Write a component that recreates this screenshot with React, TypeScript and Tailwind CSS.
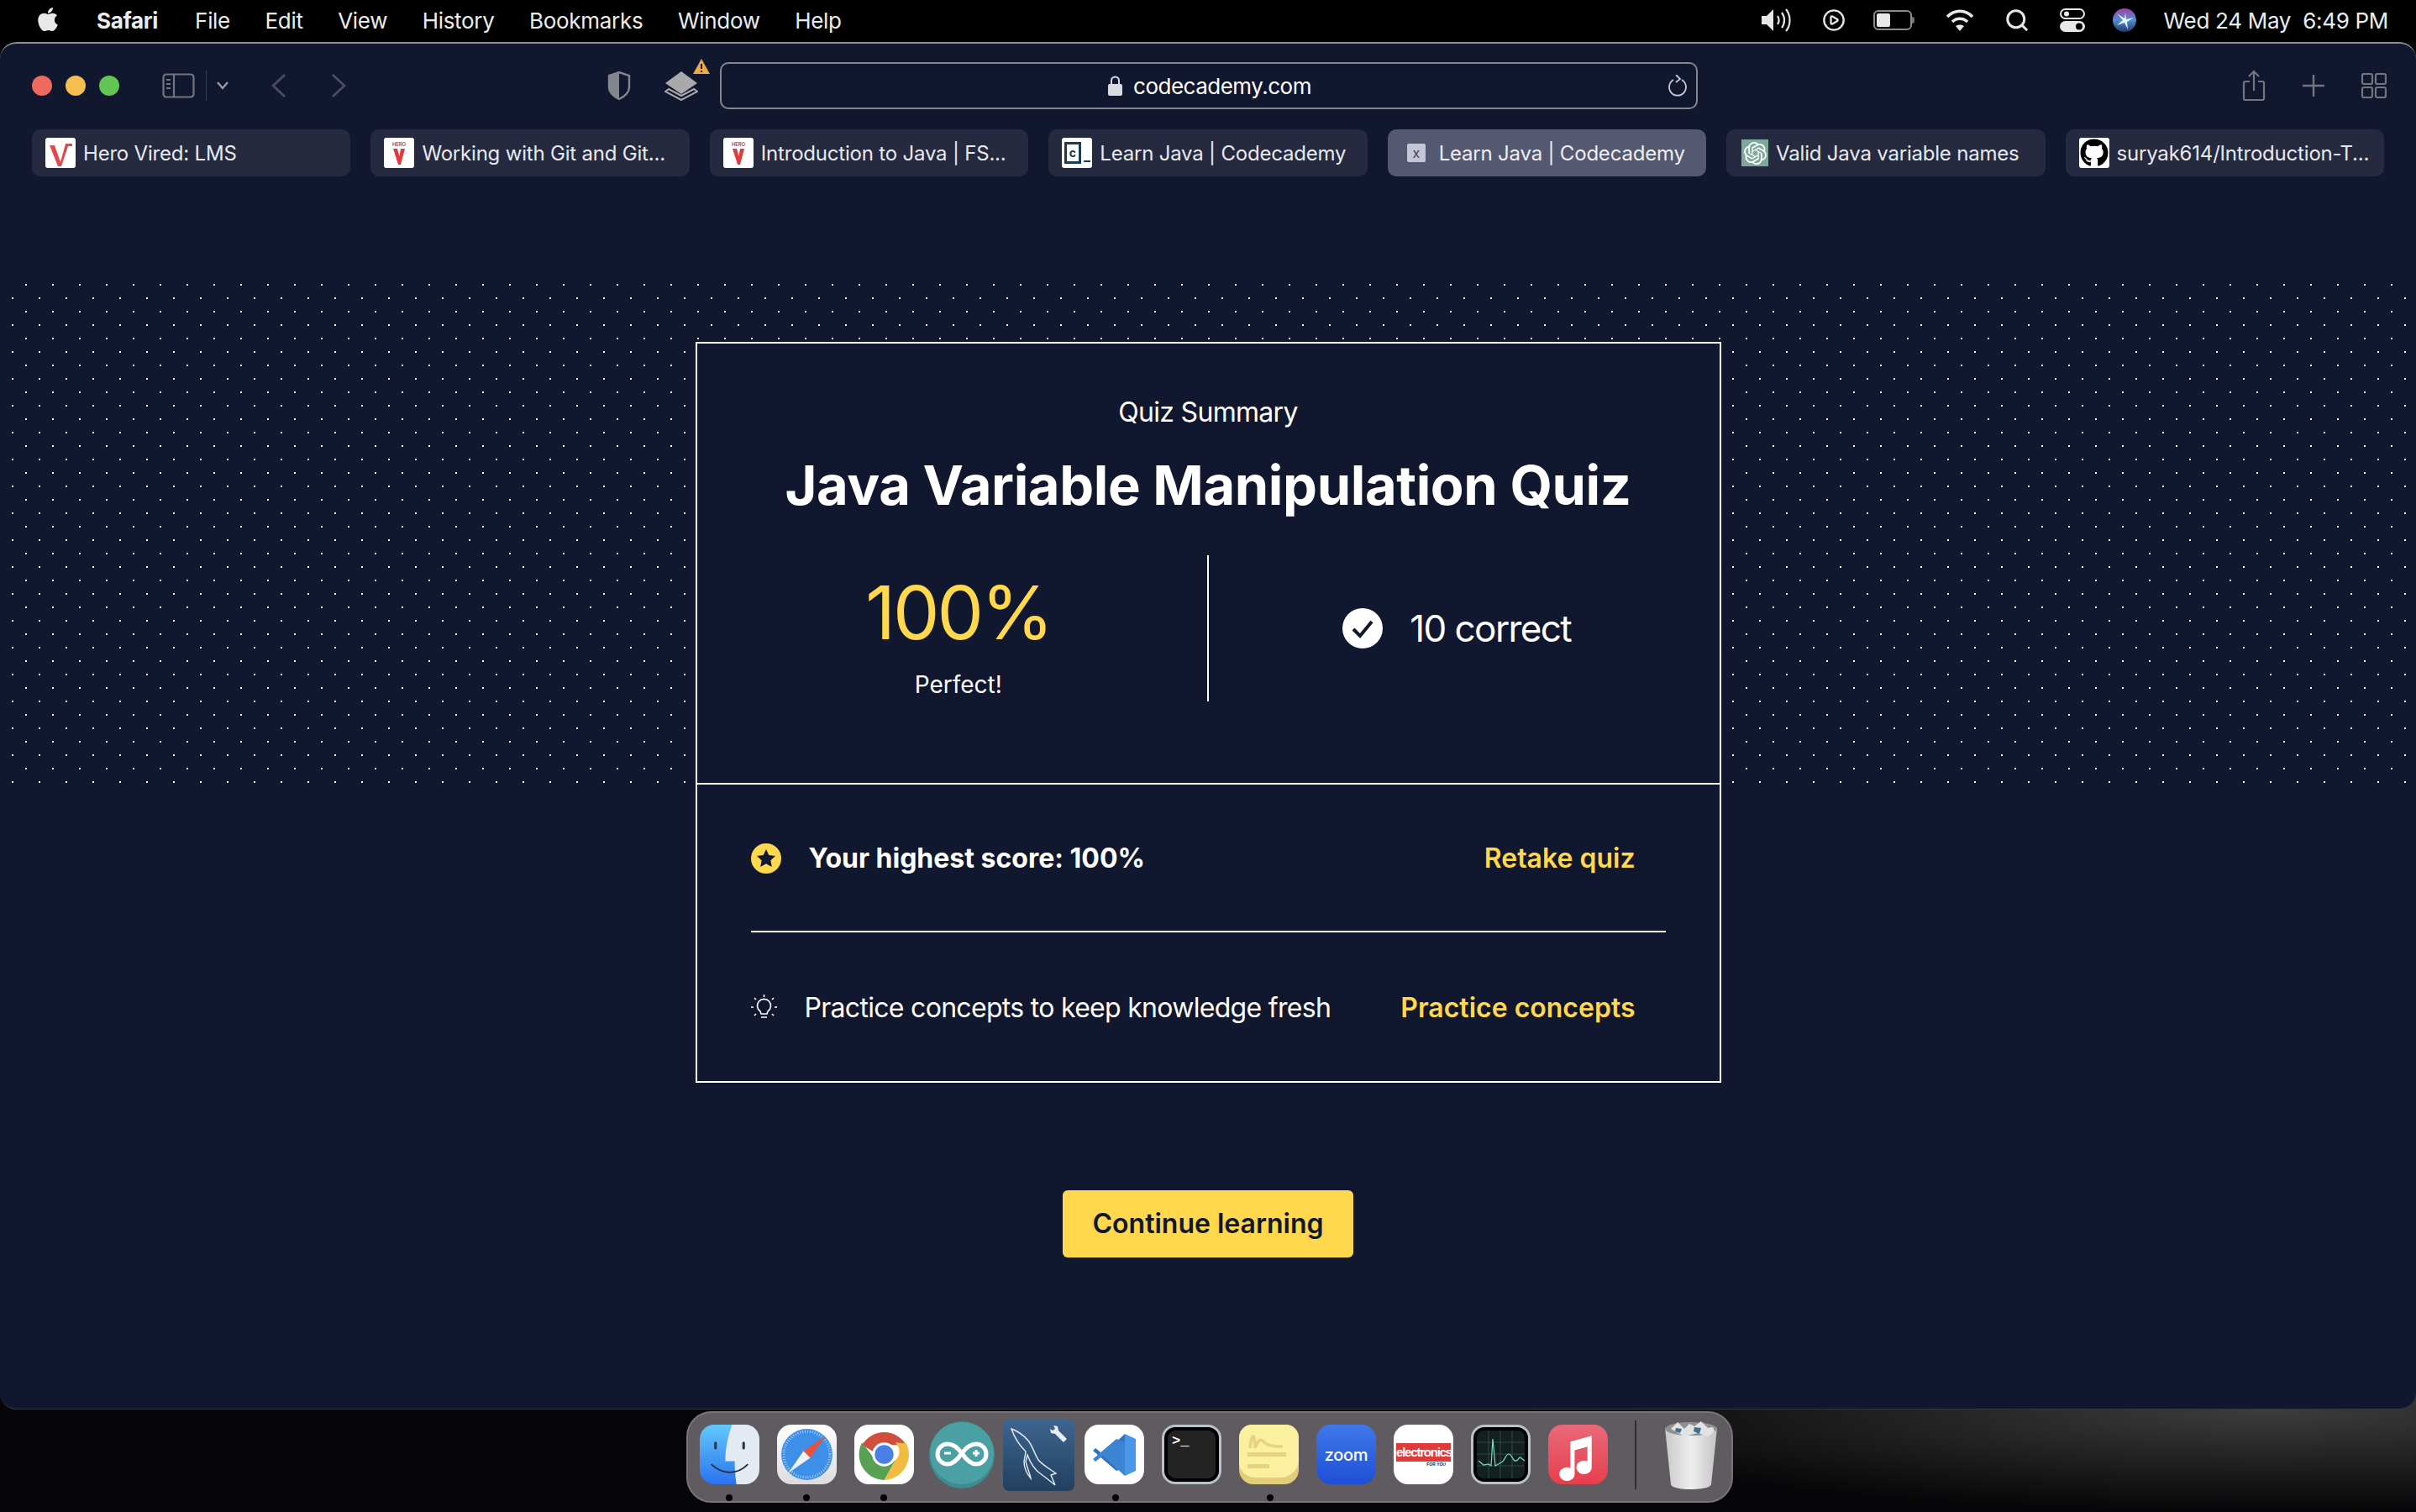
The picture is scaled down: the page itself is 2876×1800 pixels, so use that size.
import { CirclePlay, Search } from "lucide-react";
import { FaApple, FaGithub } from "react-icons/fa";
import { SiOpenai } from "react-icons/si";

const menuItems = ["File", "Edit", "View", "History", "Bookmarks", "Window", "Help"];

const RedV = ({ small }: { small?: boolean }) => (
  <svg viewBox="0 0 36 36" className="h-full w-full">
    {small ? (
      <>
        <text x="18" y="10" textAnchor="middle" fontSize="6" fontWeight="700" fill="#d8454a">HERO</text>
        <path d="M11 13h5l2.5 9 1.5-9h5l-5 19h-3z" fill="#e0393e" />
      </>
    ) : (
      <path d="M5 9h6l7 20 6-22h8v3h-5l-8 24h-4z" fill="#e2484c" />
    )}
  </svg>
);

const Favicon = ({ children, className }: { children: React.ReactNode; className?: string }) => (
  <div className={`flex h-[36px] w-[36px] shrink-0 items-center justify-center overflow-hidden rounded-[3px] bg-white ${className ?? ""}`}>
    {children}
  </div>
);

const Tab = ({ icon, label, active }: { icon: React.ReactNode; label: string; active?: boolean }) => (
  <div className={`flex h-[56px] flex-1 items-center gap-[9px] rounded-[10px] pl-[16px] text-[24px] tracking-[-0.2px] ${active ? "bg-[#545870] text-[#eeeef2]" : "bg-[#262a40] text-[#e8e9ee]"}`}>
    {icon}
    <span className="whitespace-nowrap pt-[2px]">{label}</span>
  </div>
);

const IconTile = ({ children, className }: { children: React.ReactNode; className?: string }) => (
  <div className={`flex h-[71px] w-[71px] shrink-0 items-center justify-center overflow-hidden rounded-[17px] ${className ?? ""}`}>
    {children}
  </div>
);

const Finder = () => (
  <svg viewBox="0 0 70 70" className="h-[71px] w-[71px] shrink-0">
    <defs>
      <linearGradient id="fb" x1="0" y1="0" x2="0" y2="1">
        <stop offset="0" stopColor="#62c9fb" />
        <stop offset="1" stopColor="#2c72ee" />
      </linearGradient>
    </defs>
    <rect width="70" height="70" rx="17" fill="url(#fb)" />
    <path d="M38 0h15a17 17 0 0 1 17 17v36a17 17 0 0 1-17 17H43c-1-9-2-15-2-27h-11c0-16 3-29 8-43z" fill="#e4eaf1" />
    <rect x="17" y="20" width="3" height="9" rx="1.5" fill="#23344c" />
    <rect x="50" y="20" width="3" height="9" rx="1.5" fill="#23344c" />
    <path d="M14 47c13 12 30 12 42 0" fill="none" stroke="#1f2a3a" strokeWidth="1.8" strokeLinecap="round" />
  </svg>
);

const Safari = () => (
  <IconTile className="bg-[linear-gradient(#ffffff,#dcdcdc)]">
    <svg viewBox="0 0 70 70" className="h-full w-full">
      <circle cx="35" cy="35" r="30" fill="#3d8fe8" />
      <circle cx="35" cy="35" r="27" fill="none" stroke="#d8e8fa" strokeWidth="3" strokeDasharray="0.7 2.2" />
      <path d="M57 13L31 31l8 8z" fill="#e8503f" />
      <path d="M13 57l26-18-8-8z" fill="#f1f1f1" />
    </svg>
  </IconTile>
);

const Chrome = () => (
  <IconTile className="bg-white">
    <svg viewBox="0 0 70 70" className="h-full w-full">
      <path d="M9 24a30 30 0 0 1 52 0H35a12 12 0 0 0-12 8z" fill="#d24e3f" />
      <path d="M61 22a30 30 0 0 1-26 43l13-23a14 14 0 0 0 0-21z" fill="#f2bc42" />
      <path d="M9 21a30 30 0 0 0 26 44l13-23-14 6a14 14 0 0 1-12-10z" fill="#57a054" />
      <circle cx="35" cy="35" r="14" fill="#ffffff" />
      <circle cx="35" cy="35" r="11" fill="#4a7fe6" />
    </svg>
  </IconTile>
);

const Arduino = () => (
  <svg viewBox="0 0 78 80" className="h-[80px] w-[78px] shrink-0">
    <ellipse cx="39" cy="40" rx="39" ry="40" fill="#3b8d90" />
    <ellipse cx="39" cy="38" rx="38" ry="37" fill="#4ba0a4" />
    <path d="M39 38c-6-8-11-11-17-11a11 11 0 0 0 0 24c6 0 11-4 17-13zm0 0c6-8 11-11 17-11a11 11 0 0 1 0 24c-6 0-11-4-17-13z" fill="none" stroke="#fff" strokeWidth="5" />
    <path d="M18 38h8" stroke="#fff" strokeWidth="3" />
    <path d="M52 38h8M56 34v8" stroke="#fff" strokeWidth="3" />
  </svg>
);

const MySql = () => (
  <svg viewBox="0 0 85 86" className="ml-[13px] mr-[12px] h-[86px] w-[85px] shrink-0">
    <defs>
      <linearGradient id="my" x1="0" y1="0" x2="0" y2="1">
        <stop offset="0" stopColor="#3e6690" />
        <stop offset="1" stopColor="#223f5f" />
      </linearGradient>
    </defs>
    <rect width="85" height="86" rx="7" fill="url(#my)" />
    <path d="M10 12c8 3 14 7 20 14 6 8 7 15 12 23 5 6 14 11 21 16l-6 2 5 12-10-8-8-6c-7-5-12-14-15-22l-2 8c2 8 5 14 6 20-5-6-8-12-8-20l2-12c-7-7-13-15-17-27z" fill="none" stroke="#e6edf4" strokeWidth="1.4" />
    <path d="M60 8l5 1 1 5 10 10-4 4-10-10-5-1-1-5 3 2 3-2z" fill="#e8edf2" />
  </svg>
);

const VsCode = () => (
  <IconTile className="bg-white">
    <svg viewBox="0 0 70 70" className="h-[70px] w-[70px]">
      <path d="M47 10l13 6v38l-13 6z" fill="#4a96e8" />
      <path d="M47 10L21 34l-9-7-3 3 28 24 10-4z" fill="#2f74bd" />
      <path d="M47 60L21 36l-9 7-3-3 28-24 10 4z" fill="#3b85d3" />
    </svg>
  </IconTile>
);

const Terminal = () => (
  <div className="flex h-[71px] w-[71px] shrink-0 rounded-[16px] border-[3px] border-[#b9c3c9] bg-black p-[4px]">
    <div className="flex-1 rounded-[9px] bg-[#232323] pl-[5px] pt-[3px] font-['Liberation_Mono',monospace] text-[17px] font-bold leading-[20px] text-white">
      &gt;_
    </div>
  </div>
);

const Notes = () => (
  <svg viewBox="0 0 71 71" className="h-[71px] w-[71px] shrink-0">
    <rect width="71" height="71" rx="17" fill="#e3cd7a" />
    <path d="M0 15A15 15 0 0 1 15 0h41a15 15 0 0 1 15 15v28c0 10-10 20-22 20H20C8 63 0 55 0 44z" fill="#fbf0a0" />
    <path d="M13 28c2-20 6-18 6 0 5-14 8-10 12-6 5 3 8 4 21 4" fill="none" stroke="#e6d280" strokeWidth="3.5" />
    <rect x="10" y="33" width="46" height="5" fill="#e6d280" />
    <rect x="10" y="47" width="26" height="5" fill="#e6d280" />
  </svg>
);

const Electronics = () => (
  <IconTile className="flex-col bg-white">
    <div className="w-[65px] bg-[#df3b3b] text-center font-['Liberation_Sans',sans-serif] text-[15px] font-bold leading-[22px] tracking-[-1.2px] text-white">
      electronics
    </div>
    <div className="w-[65px] pr-[6px] text-right font-['Liberation_Sans',sans-serif] text-[5px] font-bold leading-[6px] text-[#222]">FOR YOU</div>
  </IconTile>
);

const Activity = () => (
  <div className="flex h-[71px] w-[71px] shrink-0 rounded-[16px] border-[3px] border-[#b9c3c9] bg-black p-[4px]">
    <svg viewBox="0 0 57 57" className="h-full w-full rounded-[8px]">
      <rect width="57" height="57" fill="#12211f" />
      <path d="M0 14h57M0 28h57M0 42h57M14 0v57M28 0v57M42 0v57" stroke="#2c4a45" strokeWidth="1" />
      <path d="M2 36l6 5 6-1 3 2 2-32 3 32 7-4c5-2 5-10 9-10s5 10 9 8 3-6 6-3l4 3" fill="none" stroke="#7fd8c2" strokeWidth="1.2" />
    </svg>
  </div>
);

const Music = () => (
  <IconTile className="bg-[linear-gradient(#e8697a,#e83e4c)]">
    <svg viewBox="0 0 70 70" className="h-full w-full">
      <path d="M26 20l25-7v37a9 8 0 1 1-5-7V26l-15 4v28a9 8 0 1 1-5-7z" fill="#fff" />
    </svg>
  </IconTile>
);

const Trash = () => (
  <svg viewBox="0 0 64 82" className="ml-[33px] h-[82px] w-[64px] shrink-0">
    <defs>
      <linearGradient id="tr" x1="0" y1="0" x2="1" y2="0">
        <stop offset="0" stopColor="#c9c9c9" />
        <stop offset="0.5" stopColor="#eeeeee" />
        <stop offset="1" stopColor="#c4c4c4" />
      </linearGradient>
    </defs>
    <path d="M1 9h62l-7 67c-1 8-47 8-48 0z" fill="url(#tr)" />
    <ellipse cx="32" cy="10" rx="31" ry="8" fill="#8f9092" />
    <path d="M8 10L16 2l8 8 6-6 6 3 8-6 8 8 6-1 2 5-8 6-12-4-16 4z" fill="#e3e3e3" />
    <path d="M14 9l7 1-2 5-6-2zM36 8l8 1-2 7-7-3z" fill="#3f6f8f" />
  </svg>
);

const Sidebar = () => (
  <svg viewBox="0 0 39 30" className="h-[30px] w-[39px]" fill="none" stroke="#73757f" strokeWidth="2.2">
    <rect x="1.5" y="1.5" width="36" height="27" rx="3.5" />
    <path d="M14 2v26" />
    <path d="M5 8h5M5 13h5M5 18h5" stroke="#73757f" strokeWidth="2" />
  </svg>
);

export default function App() {
  return (
    <div className="flex h-[1800px] w-[2876px] flex-col overflow-hidden bg-[radial-gradient(ellipse_900px_120px_at_2700px_1680px,#3c3c3c,#060608)] font-['Inter',sans-serif]">
      {/* mac menu bar */}
      <div className="flex h-[50px] shrink-0 items-center bg-black pb-[2px] text-[26px] tracking-[-0.3px] text-[#ececec]">
        <FaApple className="ml-[42px] mb-[2px] h-[32px] w-[30px] text-[#e8e8e8]" />
        <span className="ml-[43px] font-bold">Safari</span>
        <div className="ml-[44px] flex gap-[41.5px]">
          {menuItems.map((m) => (
            <span key={m}>{m}</span>
          ))}
        </div>
        <div className="ml-auto flex items-center pr-[33px]">
          <svg viewBox="0 0 37 30" className="h-[30px] w-[37px]" fill="none" stroke="#e6e6e6" strokeWidth="2.2">
            <path d="M1 10h6l8-8v26l-8-8H1z" fill="#e6e6e6" stroke="none" />
            <path d="M20 10c2 3 2 7 0 10M25 6c4 5 4 13 0 18M30 2c6 7 6 19 0 26" />
          </svg>
          <CirclePlay className="ml-[36px] h-[28px] w-[28px] text-[#e6e6e6]" strokeWidth={2} />
          <div className="ml-[33px] flex items-center">
            <div className="flex h-[24px] w-[46px] rounded-[6px] border-2 border-[#8b8b8b] p-[2px]">
              <div className="w-[16px] rounded-[2px] bg-[#e8e8e8]" />
            </div>
            <div className="h-[8px] w-[3px] rounded-r bg-[#777]" />
          </div>
          <svg viewBox="0 0 34 28" className="ml-[37px] h-[28px] w-[34px]" fill="none" stroke="#e8e8e8" strokeWidth="3.6">
            <path d="M2 10c9-9 21-9 30 0" />
            <path d="M8 16c5-5 13-5 18 0" />
            <path d="M17 27l-5-6c3-2 7-2 10 0z" fill="#e8e8e8" stroke="none" />
          </svg>
          <Search className="ml-[36px] h-[30px] w-[30px] text-[#e6e6e6]" strokeWidth={2.4} />
          <svg viewBox="0 0 30 28" className="ml-[36px] h-[28px] w-[30px]">
            <rect x="1" y="1" width="28" height="11" rx="5.5" fill="none" stroke="#e8e8e8" strokeWidth="2" />
            <circle cx="8" cy="6.5" r="3" fill="#e8e8e8" />
            <rect y="15" width="30" height="13" rx="6.5" fill="#e8e8e8" />
            <circle cx="23" cy="21.5" r="4" fill="#000" />
          </svg>
          <svg viewBox="0 0 28 28" className="ml-[33px] h-[28px] w-[28px]">
            <defs>
              <linearGradient id="siri" x1="0" y1="0" x2="0" y2="1">
                <stop offset="0" stopColor="#a23fa8" />
                <stop offset="0.5" stopColor="#4f8fd0" />
                <stop offset="1" stopColor="#233a6a" />
              </linearGradient>
            </defs>
            <circle cx="14" cy="14" r="14" fill="url(#siri)" />
            <path d="M14 12L5 6l7 8-7 6 9-3 4 8-1-9 8-5-9 2-1-8z" fill="#e8f4ff" />
          </svg>
          <span className="ml-[33px] whitespace-nowrap">Wed 24 May&nbsp;&nbsp;6:49 PM</span>
        </div>
      </div>

      {/* safari window */}
      <div className="flex h-[1628px] shrink-0 flex-col rounded-[20px] border-t-2 border-b border-t-[#8d8e95] border-b-[#35374f] bg-[#11172e]">
        <div className="flex h-[102px] shrink-0 items-center pb-[2px] pl-[38px]">
          <div className="flex gap-[16px]">
            <div className="h-[24px] w-[24px] rounded-full bg-[#ee6a5f]" />
            <div className="h-[24px] w-[24px] rounded-full bg-[#f5bf4f]" />
            <div className="h-[24px] w-[24px] rounded-full bg-[#62c554]" />
          </div>
          <div className="ml-[51px]">
            <Sidebar />
          </div>
          <div className="ml-[13px] h-[36px] w-px bg-[#3b3e52]" />
          <svg viewBox="0 0 16 10" className="ml-[11px] h-[10px] w-[16px]" fill="none" stroke="#9a9ba3" strokeWidth="2.4">
            <path d="M2 1l6 7 6-7" />
          </svg>
          <svg viewBox="0 0 18 28" className="ml-[50px] h-[28px] w-[18px]" fill="none" stroke="#4c4f63" strokeWidth="2.6">
            <path d="M16 1L2 14l14 13" />
          </svg>
          <svg viewBox="0 0 18 28" className="ml-[53px] h-[28px] w-[18px]" fill="none" stroke="#4c4f63" strokeWidth="2.6">
            <path d="M2 1l14 13L2 27" />
          </svg>
          <svg viewBox="0 0 28 34" className="ml-[311px] h-[34px] w-[28px]">
            <path d="M14 1l12 4v14c0 6-6 11-12 14C8 30 2 25 2 19V5z" fill="none" stroke="#84868f" strokeWidth="2.4" />
            <path d="M14 1L2 5v14c0 6 6 11 12 14z" fill="#84868f" />
          </svg>
          <div className="relative ml-[40px] h-[36px] w-[54px]">
            <svg viewBox="0 0 40 36" className="h-[36px] w-[40px]">
              <path d="M20 1l19 14-19 13L1 15z" fill="#a9a9ab" />
              <path d="M5 22L1 25l19 10 19-10-4-3-15 8z" fill="none" stroke="#a9a9ab" strokeWidth="2" />
            </svg>
            <svg viewBox="0 0 20 18" className="absolute left-[34px] top-[-14px] h-[18px] w-[20px]">
              <path d="M10 0l10 18H0z" fill="#f0a93b" />
              <path d="M10 6v6M10 14v2" stroke="#11172e" strokeWidth="2" />
            </svg>
          </div>
          <div className="relative ml-[12px] flex h-[56px] w-[1164px] items-center justify-center rounded-[10px] border-2 border-[#85868f] pl-[2px] text-[26px] tracking-[-0.5px] text-white">
            <svg viewBox="0 0 17 24" className="mr-[13px] h-[24px] w-[17px]">
              <path d="M4 11V6a4.5 4.5 0 0 1 9 0v5" fill="none" stroke="#d9d9de" strokeWidth="2" />
              <rect y="10" width="17" height="14" rx="2" fill="#d9d9de" />
            </svg>
            codecademy.com
            <svg viewBox="0 0 24 26" className="absolute right-[10px] h-[26px] w-[24px]" fill="none" stroke="#c9cad0" strokeWidth="1.8">
              <path d="M7 6a10 10 0 1 0 10 0" />
              <path d="M10 0l5 5-5 4" />
            </svg>
          </div>
          <svg viewBox="0 0 28 38" className="ml-[648px] h-[38px] w-[28px]" fill="none" stroke="#73757f" strokeWidth="2.2">
            <path d="M14 25V2M8 8l6-6 6 6" />
            <path d="M9 14H4a2 2 0 0 0-2 2v18a2 2 0 0 0 2 2h20a2 2 0 0 0 2-2V16a2 2 0 0 0-2-2h-5" />
          </svg>
          <svg viewBox="0 0 28 28" className="ml-[43px] h-[28px] w-[28px]" stroke="#73757f" strokeWidth="2.4">
            <path d="M14 1v26M1 14h26" />
          </svg>
          <svg viewBox="0 0 30 30" className="ml-[43px] h-[30px] w-[30px]" fill="none" stroke="#73757f" strokeWidth="2.2">
            <rect x="1" y="1" width="12" height="12" rx="2" />
            <rect x="17" y="1" width="12" height="12" rx="2" />
            <rect x="1" y="17" width="12" height="12" rx="2" />
            <rect x="17" y="17" width="12" height="12" rx="2" />
          </svg>
        </div>

        <div className="flex shrink-0 gap-[24px] px-[38px]">
          <Tab label="Hero Vired: LMS" icon={<Favicon><RedV /></Favicon>} />
          <Tab label="Working with Git and Git..." icon={<Favicon><RedV small /></Favicon>} />
          <Tab label="Introduction to Java | FS..." icon={<Favicon><RedV small /></Favicon>} />
          <Tab
            label="Learn Java | Codecademy"
            icon={
              <Favicon>
                <div className="mr-[3px] flex h-[26px] w-[20px] items-center justify-center border-[3px] border-[#1f3b52] text-[14px] font-bold leading-none text-[#1f3b52]">c</div>
                <div className="mb-[-20px] h-[2px] w-[8px] bg-[#1f3b52]" />
              </Favicon>
            }
          />
          <Tab
            active
            label="Learn Java | Codecademy"
            icon={
              <div className="ml-[7px] mr-[7px] flex h-[22px] w-[22px] items-center justify-center rounded-[2px] bg-[#c4c6d8] text-[16px] leading-none text-[#3c3f58]">x</div>
            }
          />
          <Tab
            label="Valid Java variable names"
            icon={
              <div className="ml-[2px] flex h-[32px] w-[32px] shrink-0 items-center justify-center bg-[#7fa99a]">
                <SiOpenai className="h-[27px] w-[27px] text-white" />
              </div>
            }
          />
          <Tab label="suryak614/Introduction-T..." icon={<Favicon><FaGithub className="h-[34px] w-[34px] text-black" /></Favicon>} />
        </div>

        {/* page */}
        <div className="relative flex flex-1 flex-col items-center pt-[197px]">
          <svg className="absolute left-0 top-[128px] h-[594px] w-full">
            <defs>
              <pattern id="dots" width="32" height="32" patternUnits="userSpaceOnUse">
                <rect x="30" y="0" width="2" height="2" fill="#fff" />
                <rect x="14" y="16" width="2" height="2" fill="#fff" />
              </pattern>
            </defs>
            <rect width="100%" height="100%" fill="url(#dots)" />
          </svg>

          <div className="relative w-[1221px] border-2 border-white bg-[#11172e] text-white">
            <div className="flex h-[523px] flex-col items-center pt-[62px]">
              <div className="text-[32px] leading-[40px] tracking-[-0.7px]">Quiz Summary</div>
              <h1 className="mt-[27px] text-[65px] font-bold leading-[80px] tracking-[-0.4px]">Java Variable Manipulation Quiz</h1>
              <div className="mt-[43px] flex h-[174px] w-[1192px]">
                <div className="flex flex-1 flex-col items-center border-r-2 border-white pl-[3px] pt-[20px]">
                  <div className="text-[88px] leading-[96px] tracking-[-3px] text-[#ffd84d]">100%</div>
                  <div className="mt-[20px] text-[28px] leading-[36px]">Perfect!</div>
                </div>
                <div className="flex flex-1 items-center justify-center gap-[32px] pr-[4px]">
                  <svg viewBox="0 0 48 48" className="h-[48px] w-[48px]">
                    <circle cx="24" cy="24" r="24" fill="#fff" />
                    <path d="M13 25l8 8 14-17" fill="none" stroke="#11172e" strokeWidth="4" />
                  </svg>
                  <span className="text-[44px] leading-[52px] tracking-[-1.6px]">10 correct</span>
                </div>
              </div>
            </div>

            <div className="border-t-2 border-white px-[64px]">
              <div className="flex h-[176px] items-center justify-between border-b-2 border-white pr-[36px] pt-[2px]">
                <div className="flex items-center gap-[33px]">
                  <svg viewBox="0 0 36 36" className="h-[36px] w-[36px]">
                    <circle cx="18" cy="18" r="18" fill="#ffd84d" />
                    <path d="M18 7l3.3 7 7.7 1-5.6 5.2 1.4 7.8-6.8-3.8-6.8 3.8 1.4-7.8L7 15l7.7-1z" fill="#11172e" />
                  </svg>
                  <span className="text-[32px] font-bold">Your highest score: 100%</span>
                </div>
                <span className="text-[32px] font-semibold text-[#ffd84d]">Retake quiz</span>
              </div>
              <div className="flex h-[177px] items-center justify-between pr-[36px] pt-[2px]">
                <div className="flex items-center gap-[33px]">
                  <svg viewBox="0 0 31 31" className="h-[31px] w-[31px]" fill="none" stroke="#fff" strokeWidth="1.6">
                    <path d="M11 20a8 8 0 1 1 9 0l-1 3h-7z" />
                    <path d="M12 27h7M15.5 0v3M4 4l2 2M27 4l-2 2M0 15h3M28 15h3M4 25l2-2M27 25l-2-2" />
                  </svg>
                  <span className="text-[32px] tracking-[-0.7px]">Practice concepts to keep knowledge fresh</span>
                </div>
                <span className="text-[32px] font-semibold text-[#ffd84d]">Practice concepts</span>
              </div>
            </div>
          </div>

          <button className="relative mt-[128px] flex h-[80px] w-[346px] items-center justify-center rounded-[6px] bg-[#ffd84d] text-[32px] font-semibold text-[#11172e]">
            Continue learning
          </button>
        </div>
      </div>

      {/* dock */}
      <div className="ml-[817px] mt-[2px] flex h-[109px] w-[1246px] shrink-0 items-center rounded-[30px] border-2 border-[#77757a] bg-[#5f5b60] pb-[6px] pl-[14px]">
        <div className="relative flex items-center gap-[21px]">
          <Finder />
          <Safari />
          <Chrome />
          <div className="-ml-[3px] -mr-[3px]">
            <Arduino />
          </div>
          <div className="-ml-[21px] -mr-[21px]">
            <MySql />
          </div>
          <VsCode />
          <Terminal />
          <Notes />
          <IconTile className="bg-[linear-gradient(#3f78e8,#1f4fd8)] text-[20px] font-medium tracking-[-0.3px] text-white">zoom</IconTile>
          <Electronics />
          <Activity />
          <Music />
          <div className="ml-[11px] h-[82px] w-[2px] bg-[#2f2d30]" />
          <div className="-ml-[21px]">
            <Trash />
          </div>
          <div className="absolute left-[31px] top-[90px] h-[8px] w-[8px] rounded-full bg-black" />
          <div className="absolute left-[123px] top-[90px] h-[8px] w-[8px] rounded-full bg-black" />
          <div className="absolute left-[215px] top-[90px] h-[8px] w-[8px] rounded-full bg-black" />
          <div className="absolute left-[491px] top-[90px] h-[8px] w-[8px] rounded-full bg-black" />
          <div className="absolute left-[675px] top-[90px] h-[8px] w-[8px] rounded-full bg-black" />
        </div>
      </div>
    </div>
  );
}
